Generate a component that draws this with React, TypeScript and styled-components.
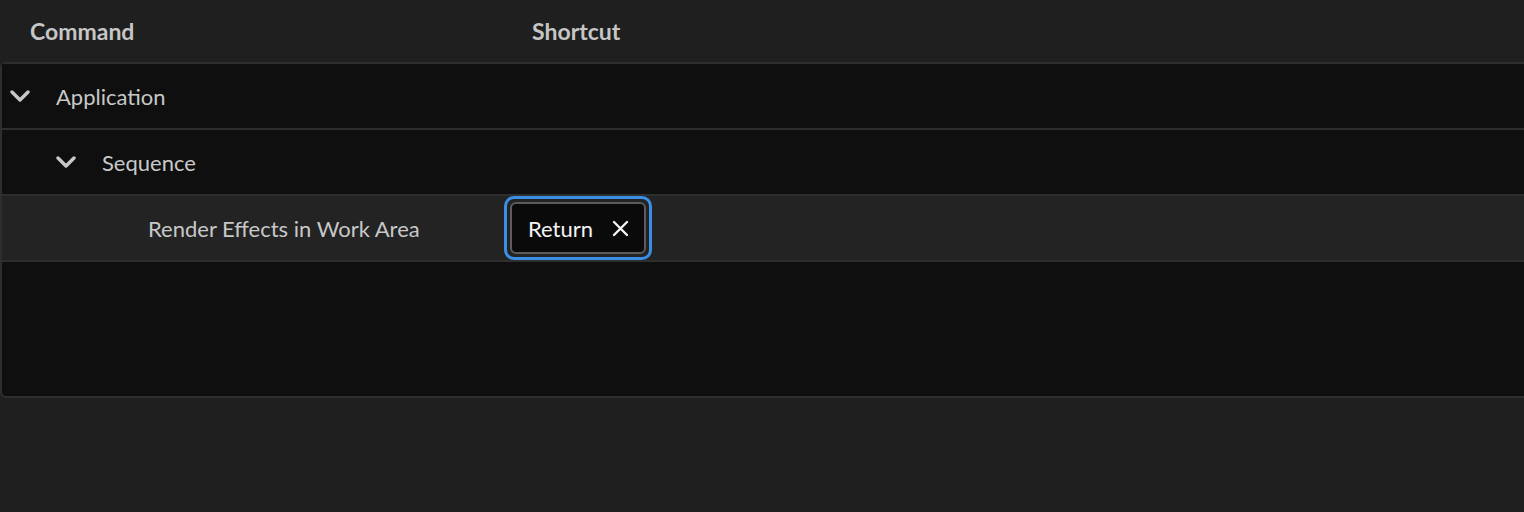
import React from 'react';
import styled, { createGlobalStyle } from 'styled-components';

const GlobalStyle = createGlobalStyle`
  html, body {
    margin: 0;
    padding: 0;
    background: #1f1f1f;
    font-family: Lato, 'Open Sans', sans-serif;
  }
`;

const Page = styled.div`
  width: 1524px;
  height: 512px;
  background: #1f1f1f;
  overflow: hidden;
`;

const HeaderRow = styled.div`
  display: grid;
  grid-template-columns: 502px 1fr;
  height: 62px;
  align-items: center;
  padding-left: 30px;
  color: #c6c6c6;
  font-size: 23px;
  font-weight: 700;
`;

const Panel = styled.div`
  width: 1540px;
  background: #0f0f0f;
  border: 2px solid #2e2e2e;
  border-radius: 6px;
  display: flex;
  flex-direction: column;
`;

const Row = styled.div<{ $selected?: boolean; $indent: number }>`
  display: grid;
  grid-template-columns: 502px 1fr;
  align-items: center;
  height: 64px;
  background: ${p => (p.$selected ? '#232323' : '#0f0f0f')};
  border-bottom: 2px solid #2e2e2e;
  padding-left: ${p => p.$indent}px;
  box-sizing: content-box;
`;

const Label = styled.div`
  display: flex;
  align-items: center;
  gap: 26px;
  color: #c8c8c8;
  font-size: 22px;
`;

const Filler = styled.div`
  height: 134px;
`;

const ShortcutCell = styled.div<{ $indent: number }>`
  margin-left: ${p => -p.$indent}px;
  display: flex;
  align-items: center;
`;

const FocusRing = styled.div`
  border: 3px solid #3a8ee6;
  border-radius: 10px;
  padding: 3px;
  display: inline-flex;
`;

const Chip = styled.div`
  display: flex;
  align-items: center;
  gap: 19px;
  height: 52px;
  box-sizing: border-box;
  padding: 0 15px 0 16px;
  border: 2px solid #5c5c5c;
  border-radius: 6px;
  background: #0a0a0a;
  color: #f4f4f4;
  font-size: 22px;
`;

const Chevron = () => (
  <svg width="20" height="14" viewBox="0 0 20 14" fill="none">
    <path d="M2 3 L10 11 L18 3" stroke="#c8c8c8" strokeWidth="3.4" strokeLinecap="round" strokeLinejoin="round" />
  </svg>
);

const CloseIcon = () => (
  <svg width="17" height="17" viewBox="0 0 17 17" fill="none">
    <path d="M2 2 L15 15 M15 2 L2 15" stroke="#f4f4f4" strokeWidth="2.4" strokeLinecap="round" />
  </svg>
);

const rows = [
  { label: 'Application', indent: 8, chevron: true },
  { label: 'Sequence', indent: 54, chevron: true },
  { label: 'Render Effects in Work Area', indent: 146, chevron: false, shortcut: 'Return' },
];

export default function App() {
  return (
    <Page>
      <GlobalStyle />
      <HeaderRow>
        <span>Command</span>
        <span>Shortcut</span>
      </HeaderRow>
      <Panel>
        {rows.map(r => (
          <Row key={r.label} $indent={r.indent} $selected={!!r.shortcut}>
            <Label>
              {r.chevron && <Chevron />}
              <span>{r.label}</span>
            </Label>
            <ShortcutCell $indent={r.indent}>
              {r.shortcut && (
                <FocusRing>
                  <Chip>
                    <span>{r.shortcut}</span>
                    <CloseIcon />
                  </Chip>
                </FocusRing>
              )}
            </ShortcutCell>
          </Row>
        ))}
        <Filler />
      </Panel>
    </Page>
  );
}
